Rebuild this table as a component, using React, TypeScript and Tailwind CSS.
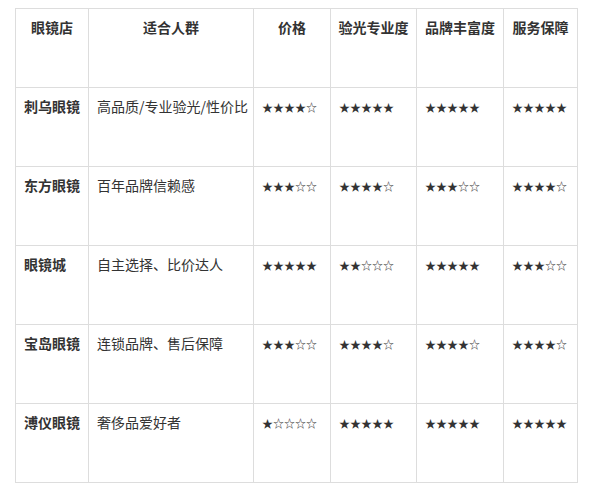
import { Fragment } from 'react';

const headers = ['眼镜店', '适合人群', '价格', '验光专业度', '品牌丰富度', '服务保障'];

const rows: [string, string, number, number, number, number][] = [
  ['刺乌眼镜', '高品质/专业验光/性价比', 4, 5, 5, 5],
  ['东方眼镜', '百年品牌信赖感', 3, 4, 3, 4],
  ['眼镜城', '自主选择、比价达人', 5, 2, 5, 3],
  ['宝岛眼镜', '连锁品牌、售后保障', 3, 4, 4, 4],
  ['溥仪眼镜', '奢侈品爱好者', 1, 5, 5, 5],
];

const stars = (n: number) => '★'.repeat(n) + '☆'.repeat(5 - n);

const Stars = ({ n }: { n: number }) => (
  <div className="bg-white px-2 pt-[8px] leading-[21px] whitespace-nowrap">
    <span className="text-[11px] text-[#333]">{stars(n)}</span>
  </div>
);

const App = () => {
  return (
    <div className="w-[590px] h-[492px] bg-white pt-[8px] pl-[15px] font-['Noto_Sans_CJK_SC',sans-serif] text-[14px] leading-[21px] text-[#333]">
      <div className="grid w-[563px] grid-cols-[72px_164px_76px_85px_86px_73px] auto-rows-[78px] gap-px bg-[#dddddd] p-px">
        {headers.map((h) => (
          <div key={h} className="bg-white px-1 pt-[8px] text-center font-bold whitespace-nowrap">
            {h}
          </div>
        ))}

        {rows.map(([name, who, price, optic, brand, service]) => (
          <Fragment key={name}>
            <div className="bg-white px-2 pt-[8px] font-bold whitespace-nowrap">{name}</div>
            <div className="bg-white px-2 pt-[8px] whitespace-nowrap">{who}</div>
            <Stars n={price} />
            <Stars n={optic} />
            <Stars n={brand} />
            <Stars n={service} />
          </Fragment>
        ))}
      </div>
    </div>
  );
};

export default App;
